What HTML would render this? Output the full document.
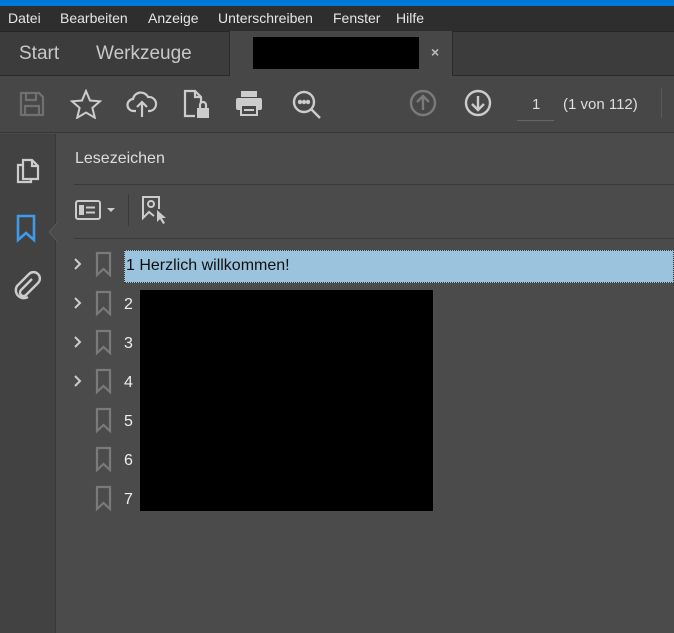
<!DOCTYPE html>
<html><head><meta charset="utf-8"><style>
*{margin:0;padding:0;box-sizing:border-box}
body{width:674px;height:633px;overflow:hidden;background:#4a4a4a;font-family:"Liberation Sans",sans-serif;position:relative;color:#ddd}
.abs{position:absolute}
#top{left:0;top:0;width:674px;height:6px;background:#0078d7}
#menu{left:0;top:6px;width:674px;height:25px;background:#2e2e2e;font-size:14px;color:#e6e6e6}
#menu span{position:absolute;top:4px}
#tabs{left:0;top:31px;width:674px;height:45px;background:#3c3c3c;border-top:1px solid #262626;border-bottom:1px solid #2a2a2a}
#tab{left:229px;top:31px;width:224px;height:45px;background:#474747;border-left:1px solid #2a2a2a;border-right:1px solid #2a2a2a}
#tool{left:0;top:76px;width:674px;height:57px;background:#474747;border-bottom:1px solid #383838}
#side{left:0;top:134px;width:56px;height:499px;background:#424242;border-right:1px solid #383838}
#panel{left:56px;top:134px;width:618px;height:499px;background:#4b4b4b}
svg{position:absolute}
.row{position:absolute;left:124px;font-size:16px;color:#eee}
</style></head><body>
<div id="top" class="abs"></div>
<div id="menu" class="abs"><span style="left:8px">Datei</span><span style="left:60px">Bearbeiten</span><span style="left:148px">Anzeige</span><span style="left:218px">Unterschreiben</span><span style="left:333px">Fenster</span><span style="left:396px">Hilfe</span></div>
<div id="tabs" class="abs"></div>
<div id="tab" class="abs"></div>
<div class="abs" style="left:19px;top:43px;font-size:19px;color:#c8c8c8">Start</div>
<div class="abs" style="left:96px;top:43px;font-size:19px;color:#c8c8c8">Werkzeuge</div>
<div class="abs" style="left:253px;top:37px;width:166px;height:32px;background:#000"></div>
<div class="abs" style="left:431px;top:44px;font-size:14px;color:#bbb;font-weight:bold">×</div>
<div id="tool" class="abs"></div>
<svg style="left:18px;top:90px" width="28" height="28" viewBox="0 0 28 28" fill="none" stroke="#707070" stroke-width="2.2"><path d="M3 3h18l4 4v18H3z"/><path d="M8 3v7h10V3M7 25v-9h14v9"/></svg>
<svg style="left:70px;top:89px" width="32" height="30" viewBox="0 0 32 30" fill="none" stroke="#ccc" stroke-width="2"><path d="M16 2l4 9.5 10 .8-7.6 6.6 2.4 9.8L16 23.5l-8.8 5.2 2.4-9.8L2 12.3l10-.8z"/></svg>
<svg style="left:126px;top:89px" width="32" height="30" viewBox="0 0 32 30" fill="none" stroke="#ccc" stroke-width="2.2"><path d="M10 22H8a6 6 0 0 1-1-12 8 8 0 0 1 15-2 6 6 0 0 1 2 14h-2"/><path d="M16 28V13M11 18l5-5 5 5"/></svg>
<svg style="left:182px;top:88px" width="30" height="32" viewBox="0 0 30 32" fill="none" stroke="#ccc" stroke-width="2.2"><path d="M13 28H3V3h10l6 6v6"/><path d="M13 3v6h6"/><rect x="15" y="20" width="12" height="10" fill="#ccc" stroke="none"/><path d="M18 20v-3a3 3 0 0 1 6 0v3"/></svg>
<svg style="left:234px;top:89px" width="30" height="28" viewBox="0 0 30 28"><rect x="7" y="2" width="16" height="6" fill="#ccc"/><rect x="2" y="9" width="26" height="12" rx="2" fill="#ccc"/><rect x="7" y="16" width="16" height="10" fill="#474747" stroke="#ccc" stroke-width="2"/><path d="M10 21h10" stroke="#ccc" stroke-width="2"/></svg>
<svg style="left:290px;top:88px" width="34" height="34" viewBox="0 0 34 34" fill="none" stroke="#ccc" stroke-width="2.4"><circle cx="14" cy="14" r="10"/><path d="M21 21l9 9"/><circle cx="10" cy="14" r="1" fill="#ccc"/><circle cx="14" cy="14" r="1" fill="#ccc"/><circle cx="18" cy="14" r="1" fill="#ccc"/></svg>
<svg style="left:409px;top:89px" width="28" height="28" viewBox="0 0 28 28" fill="none" stroke="#7a7a7a" stroke-width="2.4"><circle cx="14" cy="14" r="12"/><path d="M14 21V7M8 13l6-6 6 6"/></svg>
<svg style="left:464px;top:89px" width="28" height="28" viewBox="0 0 28 28" fill="none" stroke="#ccc" stroke-width="2.4"><circle cx="14" cy="14" r="12"/><path d="M14 7v14M8 15l6 6 6-6"/></svg>
<div class="abs" style="left:532px;top:96px;font-size:15px;color:#ddd">1</div>
<div class="abs" style="left:517px;top:120px;width:37px;height:1px;background:#666"></div>
<div class="abs" style="left:563px;top:96px;font-size:15px;color:#ddd">(1 von 112)</div>
<div class="abs" style="left:661px;top:88px;width:1px;height:30px;background:#5a5a5a"></div>
<div id="side" class="abs"></div>
<div id="panel" class="abs"></div>
<svg style="left:14px;top:155px" width="28" height="30" viewBox="0 0 28 30" fill="none" stroke="#ccc" stroke-width="2.2"><path d="M9 5h9l6 6v13H9z"/><path d="M18 5v6h6"/><path d="M9 10H4v17h13v-3"/></svg>
<svg style="left:15px;top:213px" width="22" height="30" viewBox="0 0 22 30" fill="none" stroke="#3d9be9" stroke-width="2.6"><path d="M3 3h16v24l-8-7-8 7z"/></svg>
<svg style="left:12px;top:270px" width="30" height="30" viewBox="0 0 30 30" fill="none" stroke="#ccc" stroke-width="2.4"><path d="M20 9L9 20a3.5 3.5 0 0 0 5 5l12-12a6 6 0 0 0-9-9L5 16a8 8 0 0 0 11 11"/></svg>
<svg style="left:48px;top:223px" width="10" height="18" viewBox="0 0 10 18"><path d="M9 0L1 9l8 9" fill="#4b4b4b" stroke="#5a5a5a"/></svg>
<div class="abs" style="left:75px;top:150px;font-size:16px;color:#ddd">Lesezeichen</div>
<div class="abs" style="left:74px;top:184px;width:600px;height:1px;background:#3a3a3a"></div>
<svg style="left:75px;top:198px" width="26" height="24" viewBox="0 0 26 24" fill="none" stroke="#ccc" stroke-width="2"><rect x="1" y="3" width="24" height="18" rx="2"/><rect x="5" y="8" width="3" height="3" fill="#ccc"/><rect x="5" y="13" width="3" height="3" fill="#ccc"/><path d="M11 9.5h9M11 14.5h9"/></svg>
<svg style="left:106px;top:207px" width="10" height="6"><path d="M1 1h8l-4 4z" fill="#ccc"/></svg>
<div class="abs" style="left:128px;top:194px;width:1px;height:32px;background:#3a3a3a"></div>
<svg style="left:140px;top:194px" width="30" height="32" viewBox="0 0 30 32" fill="none" stroke="#ccc" stroke-width="2"><path d="M14 22l-5-4-6 6V3h16v12"/><circle cx="11" cy="10" r="3"/><path d="M17 16v12l3-3 3 5 2-1-3-5h4z" fill="#ccc" stroke="none"/></svg>
<div class="abs" style="left:74px;top:238px;width:600px;height:1px;background:#3a3a3a"></div>
<div class="abs" style="left:124px;top:250px;width:550px;height:33px;background:#9cc3dd;border:1px dotted #333"></div>
<div class="row" style="top:257px;color:#111;left:126px">1 Herzlich willkommen!</div>
<div class="row" style="top:296px">2</div>
<div class="row" style="top:335px">3</div>
<div class="row" style="top:374px">4</div>
<div class="row" style="top:413px">5</div>
<div class="row" style="top:452px">6</div>
<div class="row" style="top:491px">7</div>
<div class="abs" style="left:140px;top:290px;width:293px;height:221px;background:#000"></div>
<svg style="left:70px;top:250px" width="50" height="270" viewBox="0 0 50 270" fill="none">
<g stroke="#ccc" stroke-width="2"><path d="M5 9l5 5-5 5"/><path d="M5 48l5 5-5 5"/><path d="M5 87l5 5-5 5"/><path d="M5 126l5 5-5 5"/></g>
<g stroke="#7a7a7a" stroke-width="2.2">
<path d="M27 3h13v22l-6.5-6-6.5 6z"/>
<path d="M27 42h13v22l-6.5-6-6.5 6z"/>
<path d="M27 81h13v22l-6.5-6-6.5 6z"/>
<path d="M27 120h13v22l-6.5-6-6.5 6z"/>
<path d="M27 159h13v22l-6.5-6-6.5 6z"/>
<path d="M27 198h13v22l-6.5-6-6.5 6z"/>
<path d="M27 237h13v22l-6.5-6-6.5 6z"/>
</g></svg>
</body></html>
